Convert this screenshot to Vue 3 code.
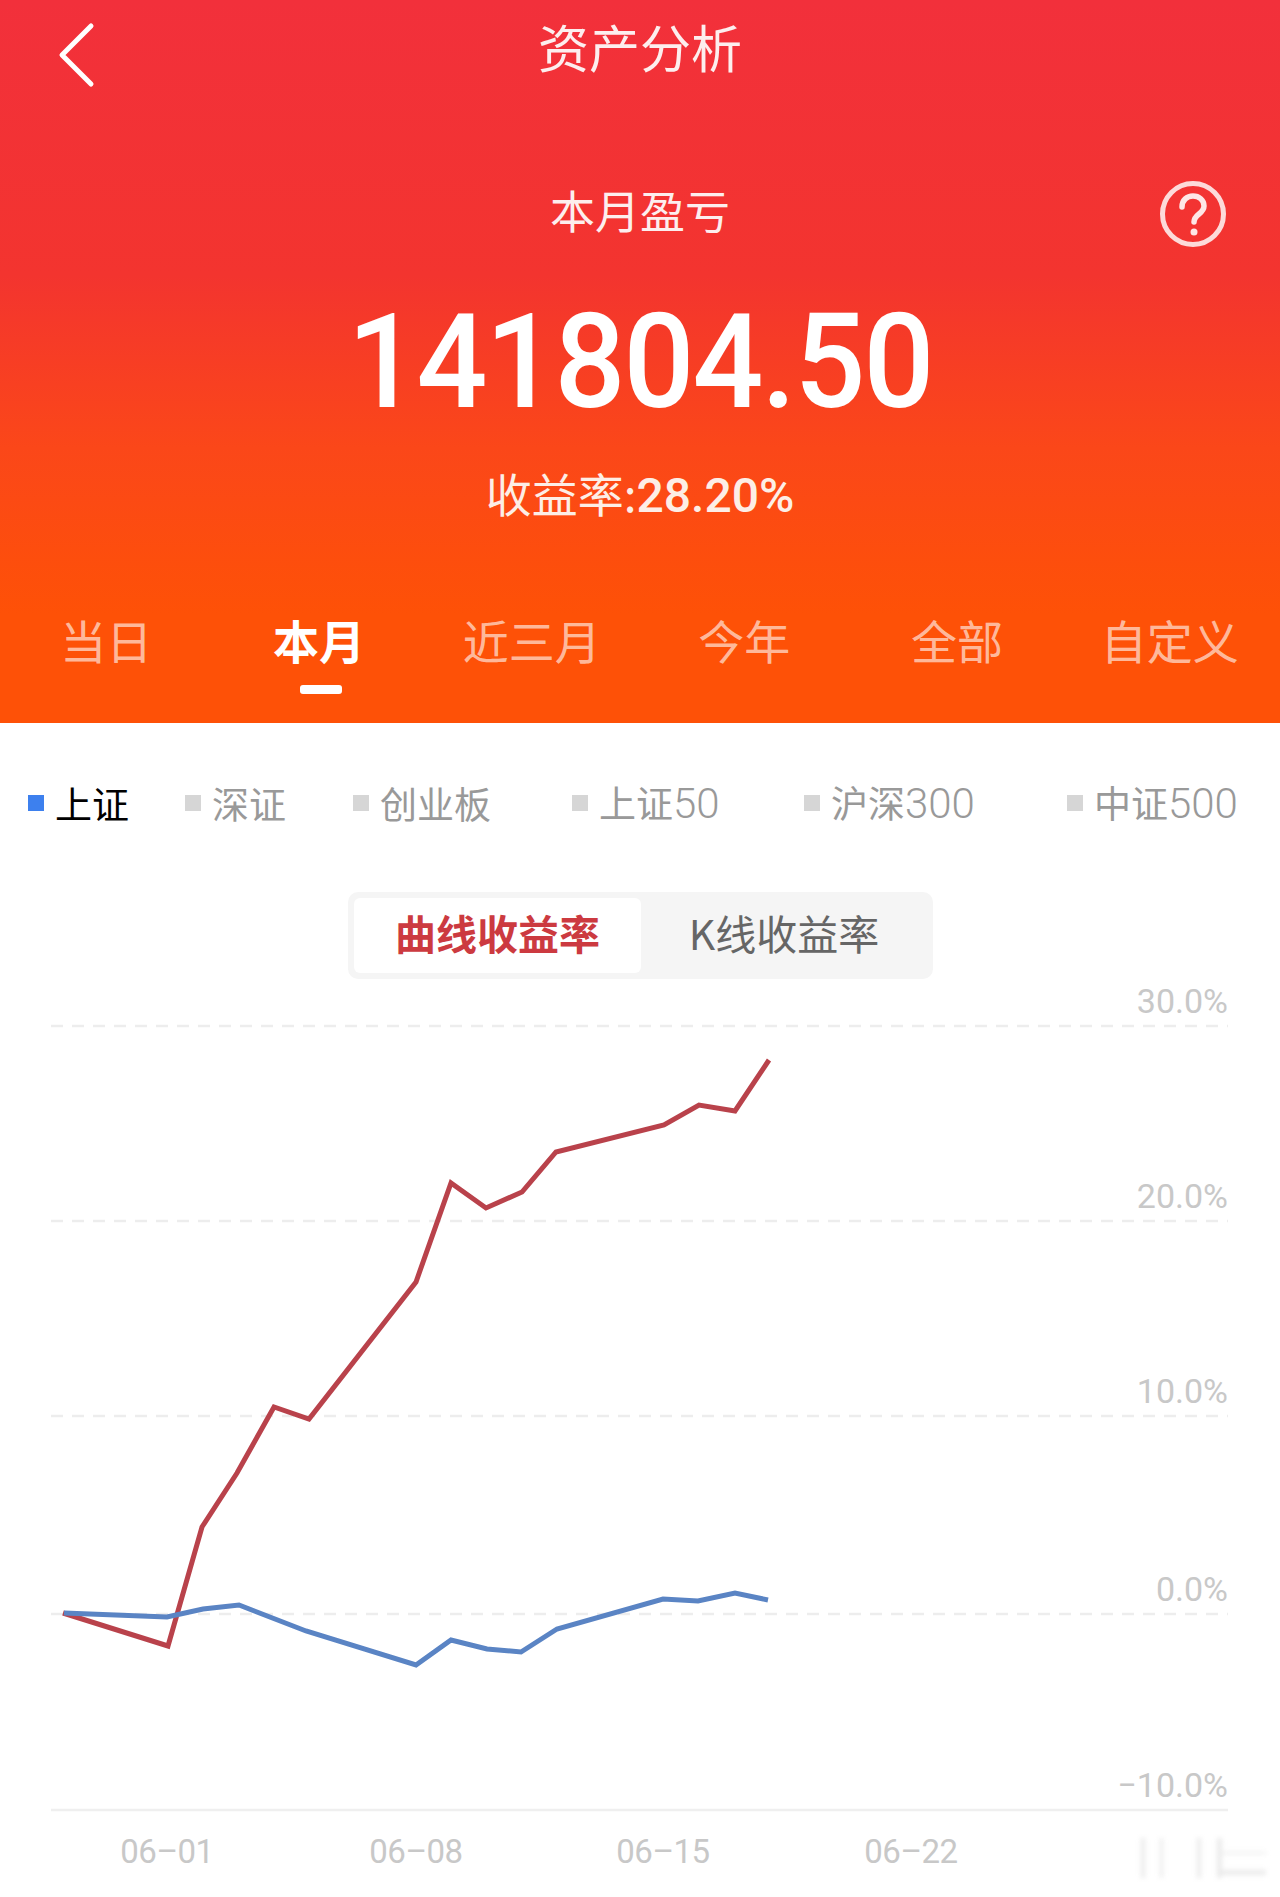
<script setup>
const tabs = ['当日', '本月', '近三月', '今年', '全部', '自定义']
const indexes = [
  { name: '上证', on: true },
  { name: '深证' },
  { name: '创业板' },
  { name: '上证', num: '50' },
  { name: '沪深', num: '300' },
  { name: '中证', num: '500' },
]

const grid = [
  { y: 1026, label: '30.0%' },
  { y: 1221, label: '20.0%' },
  { y: 1416, label: '10.0%' },
  { y: 1614, label: '0.0%' },
]
const dates = [
  { x: 167, label: '06–01' },
  { x: 416, label: '06–08' },
  { x: 663, label: '06–15' },
  { x: 911, label: '06–22' },
]

const toPoints = (list) => list.map((p) => p.join(',')).join(' ')

const redLine = toPoints([
  [63, 1613], [168, 1646], [202, 1527], [237, 1473], [274, 1407], [309, 1419],
  [416, 1282], [451, 1183], [486, 1208], [522, 1192], [556, 1152], [664, 1125],
  [699, 1105], [735, 1111], [769, 1060],
])
const blueLine = toPoints([
  [64, 1613], [167, 1617], [203, 1609], [239, 1605], [306, 1631], [416, 1665],
  [451, 1640], [487, 1649], [521, 1652], [557, 1629], [663, 1599], [698, 1601],
  [735, 1593], [768, 1600],
])
</script>

<template>
  <div class="page">
    <header class="hero">
      <div class="topbar">
        <svg class="back" width="50" height="76" viewBox="0 0 50 76">
          <path d="M36 9 7 38l29 29" fill="none" stroke="#fff" stroke-width="5" stroke-linecap="round" stroke-linejoin="round" />
        </svg>
        <h1 class="title">资产分析</h1>
      </div>
      <div class="label-row">
        <span></span>
        <span class="label">本月盈亏</span>
        <svg class="help" width="68" height="68" viewBox="0 0 68 68">
          <circle cx="34" cy="34" r="30.5" fill="none" stroke="#fff" stroke-opacity=".82" stroke-width="5" />
          <path d="M23 27c0-7 5-11 11-11s11 4 11 10c0 8-10 8-10 16" fill="none" stroke="#fff" stroke-opacity=".88" stroke-width="5.5" stroke-linecap="round" />
          <circle cx="35" cy="52" r="3.5" fill="#fff" fill-opacity=".88" />
        </svg>
      </div>
      <div class="amount">141804.50</div>
      <div class="rate">收益率:<b>28.20%</b></div>
      <nav class="tabs">
        <div v-for="(tab, i) in tabs" :key="tab" class="tab" :class="{ on: i === 1 }">
          {{ tab }}
          <i v-if="i === 1" class="bar"></i>
        </div>
      </nav>
    </header>

    <div class="legend">
      <div v-for="item in indexes" :key="item.name + item.num" class="legend-item" :class="{ on: item.on }">
        <i class="dot"></i>
        <span>{{ item.name }}<span v-if="item.num" class="num">{{ item.num }}</span></span>
      </div>
    </div>

    <div class="switch">
      <div class="seg active">曲线收益率</div>
      <div class="seg">K线收益率</div>
    </div>

    <svg class="chart" width="1280" height="918" viewBox="0 979 1280 918">
      <defs>
        <filter id="smear"><feGaussianBlur stdDeviation="2.5" /></filter>
      </defs>
      <g v-for="row in grid" :key="row.label">
        <line x1="51" x2="1228" :y1="row.y" :y2="row.y" class="dash" />
        <text x="1228" :y="row.y - 13" text-anchor="end" class="tick">{{ row.label }}</text>
      </g>
      <text x="1228" y="1797" text-anchor="end" class="tick">−10.0%</text>
      <line x1="51" x2="1228" y1="1810" y2="1810" class="axis" />
      <text v-for="d in dates" :key="d.label" :x="d.x" y="1863" text-anchor="middle" class="date">{{ d.label }}</text>
      <polyline :points="redLine" class="line red" />
      <polyline :points="blueLine" class="line blue" />
      <!-- smudged-out watermark -->
      <g filter="url(#smear)" fill="#d9d9d9" opacity=".55">
        <rect x="1141" y="1838" width="4" height="40" />
        <rect x="1160" y="1838" width="3" height="40" />
        <rect x="1197" y="1838" width="4" height="40" />
        <rect x="1217" y="1838" width="5" height="40" />
        <rect x="1222" y="1870" width="44" height="5" />
        <rect x="1222" y="1852" width="44" height="2" />
      </g>
    </svg>
  </div>
</template>

<style>
html,
body {
  background: #fff;
}
</style>

<style scoped>
.page {
  width: 1280px;
  height: 1897px;
  overflow: hidden;
  background: #fff;
  font-family: "Noto Sans CJK SC", "Noto Sans", sans-serif;
}
.hero {
  height: 723px;
  color: #fff;
  background: linear-gradient(180deg, #f2303b 0%, #f3342f 38%, #fb4719 62%, #fe5107 85%, #fe5107 100%);
}
.topbar {
  position: relative;
  height: 100px;
  display: flex;
  justify-content: center;
}
.back {
  position: absolute;
  left: 55px;
  top: 17px;
}
.title {
  margin: 0;
  font-size: 51px;
  font-weight: 400;
  line-height: 92px;
  color: #fdeeee;
}
.label-row {
  margin-top: 75px;
  height: 70px;
  padding: 0 53px;
  display: grid;
  grid-template-columns: 1fr auto 1fr;
  align-items: start;
}
.label {
  font-size: 45px;
  line-height: 70px;
  color: #fdeeee;
}
.help {
  justify-self: end;
  margin-top: 5px;
}
.amount {
  margin-top: 57px;
  height: 120px;
  line-height: 120px;
  text-align: center;
  font-family: Roboto, sans-serif;
  font-weight: 500;
  font-size: 132px;
  letter-spacing: -2px;
  transform: scaleX(0.945);
}
.rate {
  margin-top: 39px;
  height: 62px;
  line-height: 62px;
  text-align: center;
  font-size: 46px;
  color: #fdeee6;
}
.rate b {
  font-family: Roboto, sans-serif;
  font-weight: 500;
  font-size: 48px;
}
.tabs {
  margin-top: 81px;
  padding-right: 4px;
  display: grid;
  grid-template-columns: repeat(6, 1fr);
}
.tab {
  position: relative;
  height: 70px;
  line-height: 70px;
  text-align: center;
  font-size: 46px;
  color: rgba(255, 255, 255, 0.62);
}
.tab.on {
  color: #fff;
  font-weight: 700;
}
.bar {
  position: absolute;
  left: 87px;
  top: 81px;
  width: 42px;
  height: 9px;
  border-radius: 3px;
  background: #fff;
}
.legend {
  height: 40px;
  margin-top: 59px;
  padding-left: 28px;
  display: grid;
  grid-template-columns: 157px 168px 219px 232px 263px auto;
}
.legend-item {
  display: flex;
  align-items: center;
  gap: 11px;
  font-size: 37px;
  line-height: 40px;
  color: #999;
}
.legend-item.on {
  color: #000;
}
.num {
  font-family: Roboto, sans-serif;
  font-size: 42px;
  font-weight: 300;
}
.dot {
  width: 16px;
  height: 16px;
  background: #d6d6d6;
}
.legend-item.on .dot {
  background: #3d80ee;
}
.switch {
  width: 585px;
  height: 87px;
  box-sizing: border-box;
  margin: 70px 0 0 348px;
  padding: 6px;
  display: flex;
  border-radius: 10px;
  background: #f5f5f5;
}
.seg {
  flex: 1;
  text-align: center;
  font-size: 41px;
  line-height: 68px;
  color: #666;
}
.seg.active {
  flex: 0 0 287px;
  border-radius: 6px;
  background: #fff;
  color: #cc3a40;
  font-weight: 700;
}
.chart {
  display: block;
}
.dash {
  stroke: #ededed;
  stroke-width: 2.5;
  stroke-dasharray: 12 9;
}
.axis {
  stroke: #efefef;
  stroke-width: 2.5;
}
.tick,
.date {
  font-family: Roboto, sans-serif;
  font-size: 34px;
  fill: #c8c8c8;
}
.date {
  font-size: 33px;
  letter-spacing: -0.5px;
}
.line {
  fill: none;
  stroke-width: 5;
  stroke-linejoin: miter;
}
.red {
  stroke: #b9424b;
}
.blue {
  stroke: #5a84c4;
}
</style>
